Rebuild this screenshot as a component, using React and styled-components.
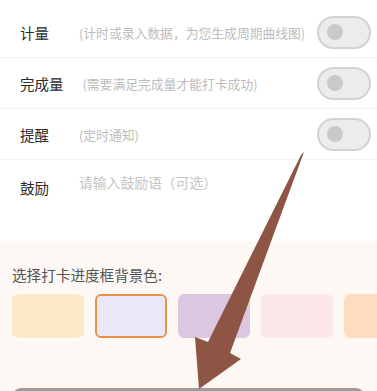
import React from "react";
import styled, { createGlobalStyle } from "styled-components";

const GlobalStyle = createGlobalStyle`
  * { box-sizing: border-box; }
  body {
    margin: 0;
    background: #ffffff;
    font-family: "Noto Sans CJK SC", "Noto Sans", sans-serif;
  }
`;

const rows = [
  { label: "计量", hint: "(计时或录入数据，为您生成周期曲线图)" },
  { label: "完成量", hint: "(需要满足完成量才能打卡成功)" },
  { label: "提醒", hint: "(定时通知)" },
];

const swatches = [
  { color: "#fde9c6" },
  { color: "#e9e9f9", active: true },
  { color: "#dcc7e0" },
  { color: "#fde7e9" },
  { color: "#fddcc0" },
];

const App = () => {
  return (
    <>
      <GlobalStyle />
      <Page>
        <Settings>
          {rows.map((r) => (
            <Row key={r.label}>
              <Label>{r.label}</Label>
              <Hint>{r.hint}</Hint>
              <Toggle>
                <Knob />
              </Toggle>
            </Row>
          ))}
          <NoteRow>
            <Label $low>鼓励</Label>
            <Placeholder>请输入鼓励语（可选）</Placeholder>
          </NoteRow>
        </Settings>

        <ColorSection>
          <SectionTitle>选择打卡进度框背景色:</SectionTitle>
          <Swatches>
            {swatches.map((s, i) => (
              <Swatch key={i} $color={s.color} $active={s.active} />
            ))}
          </Swatches>
          <BottomBar />
        </ColorSection>

        <Arrow viewBox="0 0 377 391" width="377" height="391">
          <polygon
            points="301,155 304,152 230,353 241,359 199,389 195,337 208,342"
            fill="#8e5545"
          />
        </Arrow>
      </Page>
    </>
  );
};

const Page = styled.div`
  position: relative;
  width: 377px;
  height: 391px;
  overflow: hidden;
  background: #fff;
`;

const Settings = styled.div`
  padding-top: 7px;
`;

const Row = styled.div`
  height: 51px;
  display: flex;
  align-items: center;
  padding: 0 6px 0 20px;
  border-bottom: 1px solid #f4f4f4;
`;

const Label = styled.span`
  min-width: 59px;
  padding-right: 19px;
  font-size: 14.5px;
  color: #2a2a2a;
  white-space: nowrap;
  margin-top: ${({ $low }) => ($low ? "5px" : "0")};
`;

const Hint = styled.span`
  flex: 1;
  font-size: 12.8px;
  color: #bdbdbd;
  white-space: nowrap;
`;

const Toggle = styled.div`
  width: 54px;
  height: 33px;
  border-radius: 17px;
  border: 2px solid #d2d2d2;
  background: #ececec;
  display: flex;
  align-items: center;
  padding-left: 8px;
`;

const Knob = styled.div`
  width: 16px;
  height: 16px;
  border-radius: 50%;
  background: #c9c9c9;
`;

const NoteRow = styled.div`
  height: 81px;
  display: flex;
  align-items: flex-start;
  padding: 12px 20px 0;
`;

const Placeholder = styled.span`
  font-size: 13.8px;
  color: #c4c4c4;
  white-space: nowrap;
`;

const ColorSection = styled.div`
  background: #fdf8f4;
  padding: 24px 0 0 12px;
  height: 150px;
`;

const SectionTitle = styled.div`
  font-size: 14.6px;
  line-height: 20px;
  color: #555;
`;

const Swatches = styled.div`
  margin-top: 9px;
  display: flex;
  gap: 11px;
  overflow: hidden;
`;

const Swatch = styled.div`
  flex: 0 0 72px;
  height: 44px;
  border-radius: 6px;
  background: ${({ $color }) => $color};
  border: 2px solid ${({ $active, $color }) => ($active ? "#e8914a" : $color)};
`;

const BottomBar = styled.div`
  margin: 50px 12px 0 0;
  height: 20px;
  border-radius: 9px;
  background: #9b9b9b;
`;

const Arrow = styled.svg`
  position: absolute;
  left: 0;
  top: 0;
  pointer-events: none;
`;

export default App;
